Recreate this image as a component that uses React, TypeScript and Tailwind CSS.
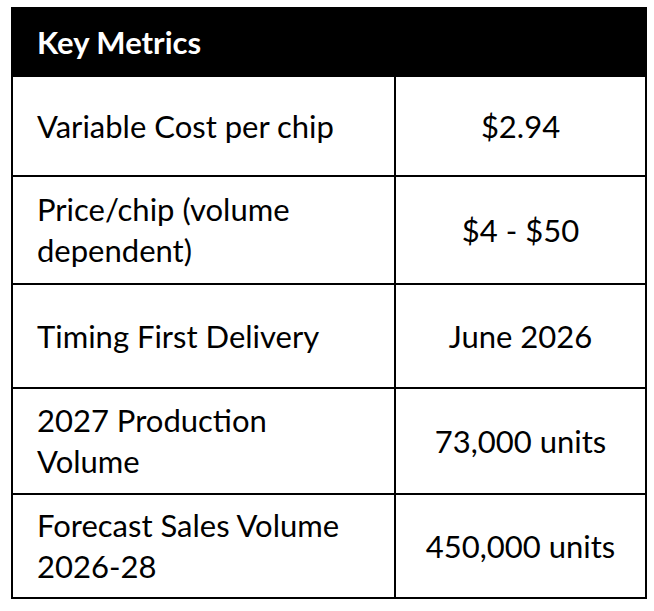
const rows: { label: string[]; value: string; h: string }[] = [
  { label: ["Variable Cost per chip"], value: "$2.94", h: "h-[100px]" },
  { label: ["Price/chip (volume", "dependent)"], value: "$4 - $50", h: "h-[108px]" },
  { label: ["Timing First Delivery"], value: "June 2026", h: "h-[104px]" },
  { label: ["2027 Production", "Volume"], value: "73,000 units", h: "h-[106px]" },
  { label: ["Forecast Sales Volume", "2026-28"], value: "450,000 units", h: "h-[104px]" },
];

export default function App() {
  return (
    <div className="w-[654px] h-[611px] bg-white pt-[7px] pl-[11px] font-['Lato','Liberation_Sans',sans-serif] text-black">
      <div className="w-[636px] border-2 border-black">
        <div className="h-[66px] bg-black flex items-center pl-[24px] text-white font-bold text-[31px]">
          Key Metrics
        </div>
        {rows.map((r) => (
          <div key={r.value} className={`flex border-t-2 border-black ${r.h}`}>
            <div className="w-[383px] border-r-2 border-black flex flex-col justify-center pl-[24px] text-[31px] leading-[41px]">
              {r.label.map((l) => (
                <span key={l}>{l}</span>
              ))}
            </div>
            <div className="flex-1 flex items-center justify-center text-[31px]">{r.value}</div>
          </div>
        ))}
      </div>
    </div>
  );
}
